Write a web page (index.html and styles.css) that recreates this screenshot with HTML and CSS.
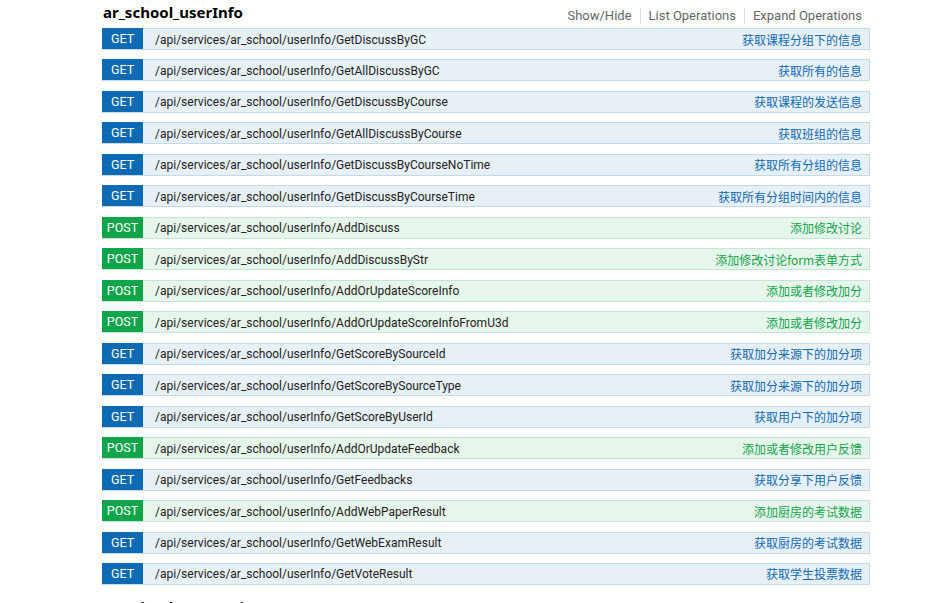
FILE: index.html
```html
<!DOCTYPE html>
<html>
<head>
<meta charset="utf-8">
<link rel="stylesheet" href="styles.css">
</head>
<body>
<div class="resource">
  <div class="heading">
    <h2 class="title">ar_school_userInfo</h2>
    <ul class="links">
      <li>Show/Hide</li>
      <li>List Operations</li>
      <li>Expand Operations</li>
    </ul>
  </div>
  <ul class="ops">
    <li class="op get"><span class="method">GET</span><span class="path">/api/services/ar_school/userInfo/GetDiscussByGC</span><span class="desc">获取课程分组下的信息</span></li>
    <li class="op get"><span class="method">GET</span><span class="path">/api/services/ar_school/userInfo/GetAllDiscussByGC</span><span class="desc">获取所有的信息</span></li>
    <li class="op get"><span class="method">GET</span><span class="path">/api/services/ar_school/userInfo/GetDiscussByCourse</span><span class="desc">获取课程的发送信息</span></li>
    <li class="op get"><span class="method">GET</span><span class="path">/api/services/ar_school/userInfo/GetAllDiscussByCourse</span><span class="desc">获取班组的信息</span></li>
    <li class="op get"><span class="method">GET</span><span class="path">/api/services/ar_school/userInfo/GetDiscussByCourseNoTime</span><span class="desc">获取所有分组的信息</span></li>
    <li class="op get"><span class="method">GET</span><span class="path">/api/services/ar_school/userInfo/GetDiscussByCourseTime</span><span class="desc">获取所有分组时间内的信息</span></li>
    <li class="op post"><span class="method">POST</span><span class="path">/api/services/ar_school/userInfo/AddDiscuss</span><span class="desc">添加修改讨论</span></li>
    <li class="op post"><span class="method">POST</span><span class="path">/api/services/ar_school/userInfo/AddDiscussByStr</span><span class="desc">添加修改讨论form表单方式</span></li>
    <li class="op post"><span class="method">POST</span><span class="path">/api/services/ar_school/userInfo/AddOrUpdateScoreInfo</span><span class="desc">添加或者修改加分</span></li>
    <li class="op post"><span class="method">POST</span><span class="path">/api/services/ar_school/userInfo/AddOrUpdateScoreInfoFromU3d</span><span class="desc">添加或者修改加分</span></li>
    <li class="op get"><span class="method">GET</span><span class="path">/api/services/ar_school/userInfo/GetScoreBySourceId</span><span class="desc">获取加分来源下的加分项</span></li>
    <li class="op get"><span class="method">GET</span><span class="path">/api/services/ar_school/userInfo/GetScoreBySourceType</span><span class="desc">获取加分来源下的加分项</span></li>
    <li class="op get"><span class="method">GET</span><span class="path">/api/services/ar_school/userInfo/GetScoreByUserId</span><span class="desc">获取用户下的加分项</span></li>
    <li class="op post"><span class="method">POST</span><span class="path">/api/services/ar_school/userInfo/AddOrUpdateFeedback</span><span class="desc">添加或者修改用户反馈</span></li>
    <li class="op get"><span class="method">GET</span><span class="path">/api/services/ar_school/userInfo/GetFeedbacks</span><span class="desc">获取分享下用户反馈</span></li>
    <li class="op post"><span class="method">POST</span><span class="path">/api/services/ar_school/userInfo/AddWebPaperResult</span><span class="desc">添加厨房的考试数据</span></li>
    <li class="op get"><span class="method">GET</span><span class="path">/api/services/ar_school/userInfo/GetWebExamResult</span><span class="desc">获取厨房的考试数据</span></li>
    <li class="op get"><span class="method">GET</span><span class="path">/api/services/ar_school/userInfo/GetVoteResult</span><span class="desc">获取学生投票数据</span></li>
  </ul>
</div>
<div class="resource next">
  <div class="heading">
    <h2 class="title">ar_school_userLogin</h2>
  </div>
</div>
</body>
</html>
```

FILE: styles.css
```css
* { box-sizing: border-box; }
html, body { margin: 0; padding: 0; background: #fff; }
body {
  font-family: Roboto, "Noto Sans CJK SC", sans-serif;
  color: #333;
}
.resource {
  width: 768px;
  margin-left: 102px;
}
.resource.next { margin-top: 10px; }
.heading {
  display: flex;
  justify-content: space-between;
  align-items: flex-end;
  height: 28px;
  padding-bottom: 5px;
}
.title {
  margin: 0 0 1px 1px;
  font-family: "Noto Sans", "Noto Sans CJK SC", sans-serif;
  font-size: 15px;
  font-weight: bold;
  color: #000;
  line-height: 20px;
}
.links {
  list-style: none;
  margin: 0 8px -1px 0;
  padding: 0;
  display: flex;
  font-size: 13px;
  line-height: 16px;
  color: #666;
}
.links li { padding: 0 8px; border-left: 1px solid #ddd; }
.links li:first-child { border-left: none; }
.links li:last-child { padding-right: 0; }
.ops { list-style: none; margin: 0; padding: 0; }
.op {
  display: flex;
  align-items: center;
  height: 22px;
  margin-bottom: 9.47px;
  border: 1px solid;
  font-size: 12px;
}
.op.get { background: #e7f0f7; border-color: #c3d9ec; }
.op.post { background: #e7f6ec; border-color: #c3e8d1; }
.method {
  align-self: flex-start;
  width: 41px;
  height: 21px;
  margin: -1px 0 0 -1px;
  color: #fff;
  font-size: 12.5px;
  line-height: 22px;
  text-align: center;
}
.get .method { background: #0f6ab4; }
.post .method { background: #10a54a; }
.path { padding-left: 12px; padding-top: 1px; color: #222; flex: 1; }
.desc { padding-right: 7px; font-size: 12px; font-family: "Noto Sans CJK SC", sans-serif; }
.get .desc { color: #0f6ab4; }
.post .desc { color: #10a54a; }
```
